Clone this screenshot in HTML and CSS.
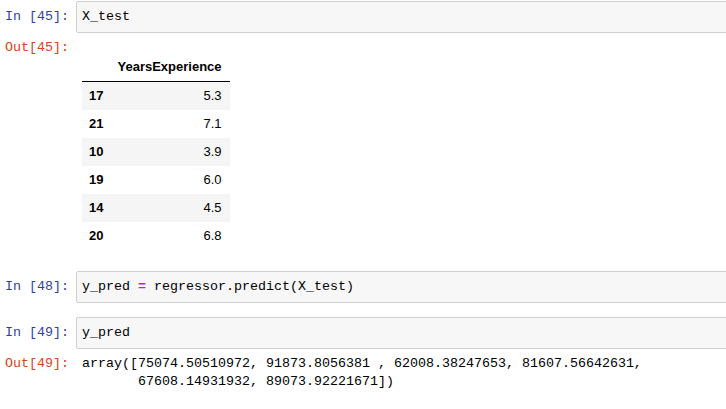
FILE: index.html
```html
<!DOCTYPE html>
<html>
<head>
<meta charset="utf-8">
<link rel="stylesheet" href="styles.css">
</head>
<body>
<div class="notebook">
  <div class="cell">
    <div class="row">
      <div class="prompt in">In [45]:</div>
      <div class="input-area">X_test</div>
    </div>
    <div class="row">
      <div class="prompt out">Out[45]:</div>
      <div class="output-area table-out">
        <table class="df">
          <thead>
            <tr><th></th><th>YearsExperience</th></tr>
          </thead>
          <tbody>
            <tr><th>17</th><td>5.3</td></tr>
            <tr><th>21</th><td>7.1</td></tr>
            <tr><th>10</th><td>3.9</td></tr>
            <tr><th>19</th><td>6.0</td></tr>
            <tr><th>14</th><td>4.5</td></tr>
            <tr><th>20</th><td>6.8</td></tr>
          </tbody>
        </table>
      </div>
    </div>
  </div>
  <div class="cell">
    <div class="row">
      <div class="prompt in">In [48]:</div>
      <div class="input-area">y_pred <span class="op">=</span> regressor.predict(X_test)</div>
    </div>
  </div>
  <div class="cell">
    <div class="row">
      <div class="prompt in">In [49]:</div>
      <div class="input-area">y_pred</div>
    </div>
    <div class="row">
      <div class="prompt out">Out[49]:</div>
      <pre class="output-area text-out">array([75074.50510972, 91873.8056381 , 62008.38247653, 81607.56642631,
       67608.14931932, 89073.92221671])</pre>
    </div>
  </div>
</div>
</body>
</html>
```
FILE: styles.css
```css
html, body {
  margin: 0;
  padding: 0;
  background: #ffffff;
  overflow: hidden;
}

.notebook {
  padding-top: 1px;
  display: flex;
  flex-direction: column;
  gap: 14px;
  font-family: "Liberation Mono", "DejaVu Sans Mono", monospace;
  font-size: 13.33px;
  line-height: 18px;
  color: #000000;
}

.cell {
  display: flex;
  flex-direction: column;
}

.row {
  display: flex;
  align-items: flex-start;
}

.prompt {
  width: 69px;
  flex: 0 0 69px;
  padding-right: 7px;
  text-align: right;
  white-space: pre;
}

.prompt.in {
  color: #303f9f;
  padding-top: 7px;
}

.prompt.out {
  color: #d84315;
  padding-top: 6px;
}

.input-area {
  flex: 1;
  margin-right: -10px;
  background: #f7f7f7;
  border: 1px solid #cfcfcf;
  border-radius: 2px;
  padding: 6px 5px;
  white-space: pre;
}

.op {
  color: #aa22ff;
  font-weight: bold;
}

.output-area {
  flex: 1;
  margin: 0;
}

.text-out {
  font-family: "Liberation Mono", "DejaVu Sans Mono", monospace;
  font-size: 13.33px;
  line-height: 18px;
  padding: 6px 0 0 6px;
}

.table-out {
  padding: 20px 0 7px 6px;
}

.df {
  border-collapse: collapse;
  font-family: "Liberation Sans", Arial, sans-serif;
  font-size: 13px;
  color: #000000;
}

.df th,
.df td {
  height: 28px;
  padding: 0 8px 0 7px;
  line-height: 28px;
  text-align: right;
  vertical-align: middle;
}

.df thead th {
  border-bottom: 1px solid #000000;
  font-weight: bold;
}

.df tbody th {
  font-weight: bold;
  text-align: left;
  padding: 0 7px;
}

.df tbody tr:nth-child(odd) {
  background: #f5f5f5;
}
```
